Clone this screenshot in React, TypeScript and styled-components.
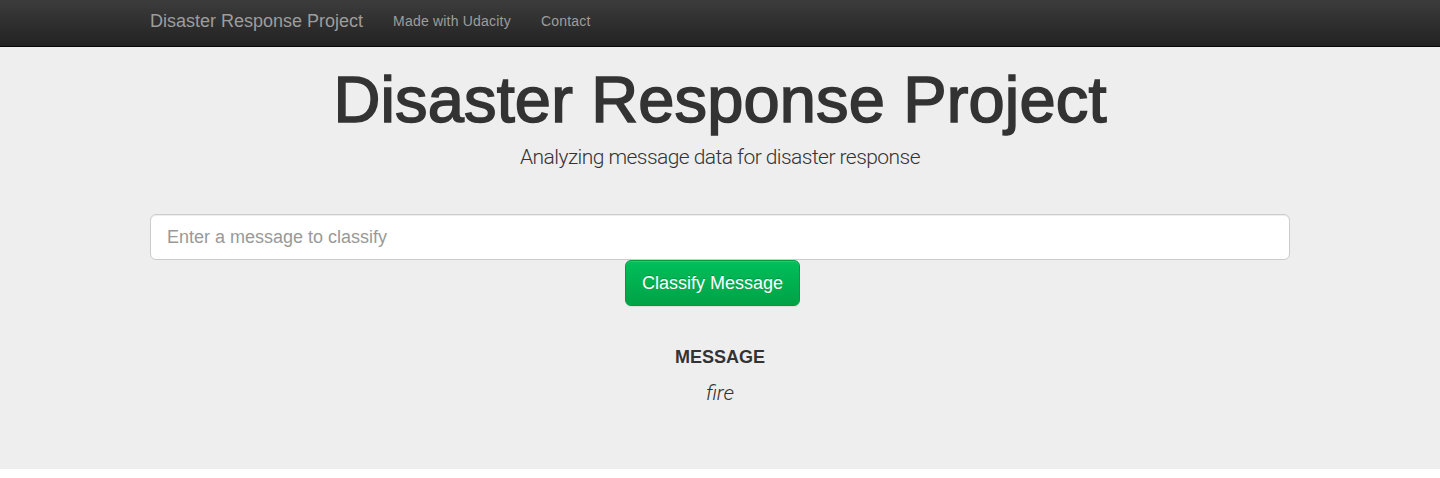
import styled, { createGlobalStyle } from "styled-components";

const GlobalStyle = createGlobalStyle`
  html, body {
    margin: 0;
    padding: 0;
    background: #ffffff;
    font-family: "Liberation Sans", Arial, sans-serif;
    font-size: 14px;
    color: #333333;
  }
  * {
    box-sizing: border-box;
  }
`;

// --------------------- NAVBAR ---------------------------------

const Navbar = styled.nav`
  height: 47px;
  background: linear-gradient(to bottom, #3c3c3c 0%, #222222 100%);
  border-bottom: 1px solid #080808;
`;

const Container = styled.div`
  width: 1170px;
  margin: 0 auto;
  padding: 0 15px;
`;

const NavRow = styled(Container)`
  display: flex;
  align-items: center;
  height: 42px;
`;

const Brand = styled.a`
  font-size: 18px;
  color: #9d9d9d;
  padding: 0 15px 0 0;
  text-decoration: none;
  line-height: 20px;
`;

const NavLink = styled.a`
  font-size: 14px;
  color: #9d9d9d;
  padding: 0 15px;
  text-decoration: none;
  line-height: 20px;
  letter-spacing: 0.2px;
`;

// --------------------- JUMBOTRON ---------------------------------

const Jumbotron = styled.section`
  background: #eeeeee;
  height: 422px;
`;

const Hero = styled(Container)`
  display: flex;
  flex-direction: column;
  align-items: center;
`;

const Title = styled.h1`
  margin: 18px 0 0;
  font-size: 65px;
  line-height: 70px;
  font-weight: 400;
  color: #333333;
  letter-spacing: 0.15px;
  -webkit-text-stroke: 1.6px #333333;
`;

const Lead = styled.p`
  margin: 7px 0 0;
  font-family: "Roboto", "Liberation Sans", sans-serif;
  font-weight: 300;
  font-size: 21px;
  line-height: 30px;
  letter-spacing: -0.55px;
  color: #333333;
`;

const Form = styled.form`
  width: 100%;
  margin-top: 42px;
  display: flex;
  flex-direction: column;
  align-items: center;
`;

const Input = styled.input`
  width: 100%;
  height: 46px;
  padding: 10px 16px;
  font-family: "Liberation Sans", Arial, sans-serif;
  font-size: 18px;
  color: #555555;
  background: #ffffff;
  border: 1px solid #cccccc;
  border-radius: 6px;
  box-shadow: inset 0 1px 1px rgba(0, 0, 0, 0.075);
  outline: none;

  &::placeholder {
    color: #999999;
  }
`;

const Button = styled.button`
  height: 46px;
  margin-right: 15px;
  padding: 0 16px;
  font-family: "Liberation Sans", Arial, sans-serif;
  font-size: 18px;
  color: #ffffff;
  background: linear-gradient(to bottom, #00bf5a 0%, #00a246 100%);
  border: 1px solid #009a42;
  border-radius: 6px;
  text-shadow: 0 -1px 0 rgba(0, 0, 0, 0.2);
  box-shadow: inset 0 1px 0 rgba(255, 255, 255, 0.15), 0 1px 1px rgba(0, 0, 0, 0.075);
  cursor: pointer;
`;

const Result = styled.div`
  margin-top: 40px;
  display: flex;
  flex-direction: column;
  align-items: center;
`;

const Label = styled.h4`
  margin: 0;
  font-size: 18px;
  line-height: 22px;
  font-weight: 700;
  text-transform: uppercase;
  color: #333333;
`;

const Message = styled.p`
  margin: 12px 0 0;
  font-family: "Roboto", "Liberation Sans", sans-serif;
  font-style: italic;
  font-weight: 300;
  font-size: 21px;
  line-height: 26px;
  color: #333333;
`;

export default function App() {
  return (
    <>
      <GlobalStyle />
      <Navbar>
        <NavRow>
          <Brand href="#">Disaster Response Project</Brand>
          <NavLink href="#">Made with Udacity</NavLink>
          <NavLink href="#">Contact</NavLink>
        </NavRow>
      </Navbar>
      <Jumbotron>
        <Hero>
          <Title>Disaster Response Project</Title>
          <Lead>Analyzing message data for disaster response</Lead>
          <Form onSubmit={(e) => e.preventDefault()}>
            <Input type="text" placeholder="Enter a message to classify" />
            <Button type="submit">Classify Message</Button>
          </Form>
          <Result>
            <Label>Message</Label>
            <Message>fire</Message>
          </Result>
        </Hero>
      </Jumbotron>
    </>
  );
}
